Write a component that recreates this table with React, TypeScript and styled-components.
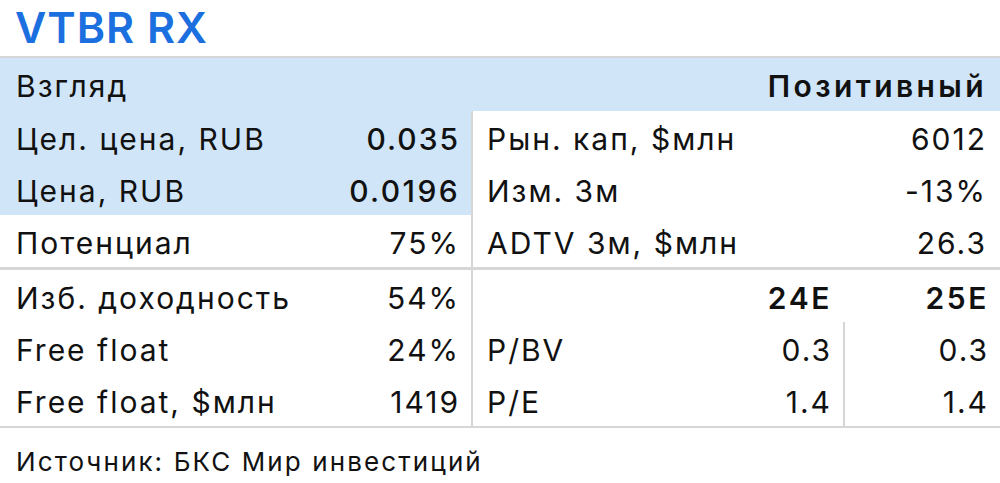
import React from "react";
import styled, { createGlobalStyle } from "styled-components";

const Global = createGlobalStyle`
  html, body { margin: 0; padding: 0; background: #fff; }
  body { font-family: Inter, "Liberation Sans", Arial, sans-serif; color: #111; }
  * { box-sizing: border-box; }
`;

const BLUE_BG = "#d0e5f8";
const LINE = "#d6d6d6";

const Page = styled.div`
  width: 1000px;
  height: 483px;
  display: flex;
  flex-direction: column;
`;

const Title = styled.h1`
  margin: 0;
  height: 56px;
  padding: 2px 0 0 15px;
  font-size: 43px;
  line-height: 50px;
  font-weight: 600;
  letter-spacing: 1px;
  color: #1b6fdf;
`;

const Table = styled.div`
  border-top: 2px solid ${LINE};
  border-bottom: 2px solid ${LINE};
  font-size: 30px;
  letter-spacing: 2px;
`;

const Row = styled.div<{ $blue?: boolean }>`
  height: 53px;
  display: flex;
  align-items: center;
  justify-content: space-between;
  padding: 3px 13px 0 16px;
  background: ${(p) => (p.$blue ? BLUE_BG : "transparent")};
`;

const Section = styled.div<{ $divider?: boolean }>`
  display: grid;
  grid-template-columns: 471px 2px 1fr;
  border-bottom: ${(p) => (p.$divider ? `3px solid ${LINE}` : "none")};
`;

const VLine = styled.div`
  background: ${LINE};
`;

const Col = styled.div``;

const Cell = styled.div<{ $blue?: boolean; $padL?: number; $padR?: number }>`
  height: 52px;
  display: flex;
  align-items: center;
  justify-content: space-between;
  padding: 3px ${(p) => p.$padR ?? 11}px 0 ${(p) => p.$padL ?? 16}px;
  background: ${(p) => (p.$blue ? BLUE_BG : "transparent")};
  white-space: nowrap;
`;

const Label = styled.span``;

const Value = styled.span<{ $weight?: number; $spacing?: number }>`
  font-weight: ${(p) => p.$weight ?? 400};
  letter-spacing: ${(p) => p.$spacing ?? 2}px;
`;

const Multi = styled.div`
  display: grid;
  grid-template-columns: 1fr 154px 157px;
  grid-auto-rows: 52px;
`;

const MCell = styled.div<{ $right?: boolean; $line?: boolean; $bold?: boolean }>`
  display: flex;
  align-items: center;
  justify-content: ${(p) => (p.$right ? "flex-end" : "flex-start")};
  padding: ${(p) => (p.$right ? "3px 11px 0 0" : "3px 0 0 14px")};
  border-left: ${(p) => (p.$line ? `2px solid ${LINE}` : "none")};
  font-weight: ${(p) => (p.$bold ? 600 : 400)};
  letter-spacing: ${(p) => (p.$bold ? 2.6 : 2)}px;
  white-space: nowrap;
`;

const Source = styled.div`
  padding: 18px 0 0 16px;
  font-size: 26px;
  letter-spacing: 2.1px;
`;

export default function App() {
  return (
    <>
      <Global />
      <Page>
        <Title>VTBR RX</Title>
        <Table>
          <Row $blue>
            <Label>Взгляд</Label>
            <Value $weight={600} $spacing={3.4}>Позитивный</Value>
          </Row>
          <Section $divider>
            <Col>
              <Cell $blue>
                <Label>Цел. цена, RUB</Label>
                <Value $weight={500}>0.035</Value>
              </Cell>
              <Cell $blue>
                <Label>Цена, RUB</Label>
                <Value $weight={500} $spacing={2.4}>0.0196</Value>
              </Cell>
              <Cell>
                <Label>Потенциал</Label>
                <Value>75%</Value>
              </Cell>
            </Col>
            <VLine />
            <Col>
              <Cell $padL={14} $padR={13}>
                <Label>Рын. кап, $млн</Label>
                <Value>6012</Value>
              </Cell>
              <Cell $padL={14} $padR={13}>
                <Label>Изм. 3м</Label>
                <Value>-13%</Value>
              </Cell>
              <Cell $padL={14} $padR={13}>
                <Label>ADTV 3м, $млн</Label>
                <Value>26.3</Value>
              </Cell>
            </Col>
          </Section>
          <Section>
            <Col>
              <Cell>
                <Label>Изб. доходность</Label>
                <Value>54%</Value>
              </Cell>
              <Cell>
                <Label>Free float</Label>
                <Value>24%</Value>
              </Cell>
              <Cell>
                <Label>Free float, $млн</Label>
                <Value>1419</Value>
              </Cell>
            </Col>
            <VLine />
            <Multi>
              <MCell />
              <MCell $right $bold>24E</MCell>
              <MCell $right $bold>25E</MCell>
              <MCell>P/BV</MCell>
              <MCell $right>0.3</MCell>
              <MCell $right $line>0.3</MCell>
              <MCell>P/E</MCell>
              <MCell $right>1.4</MCell>
              <MCell $right $line>1.4</MCell>
            </Multi>
          </Section>
        </Table>
        <Source>Источник: БКС Мир инвестиций</Source>
      </Page>
    </>
  );
}
